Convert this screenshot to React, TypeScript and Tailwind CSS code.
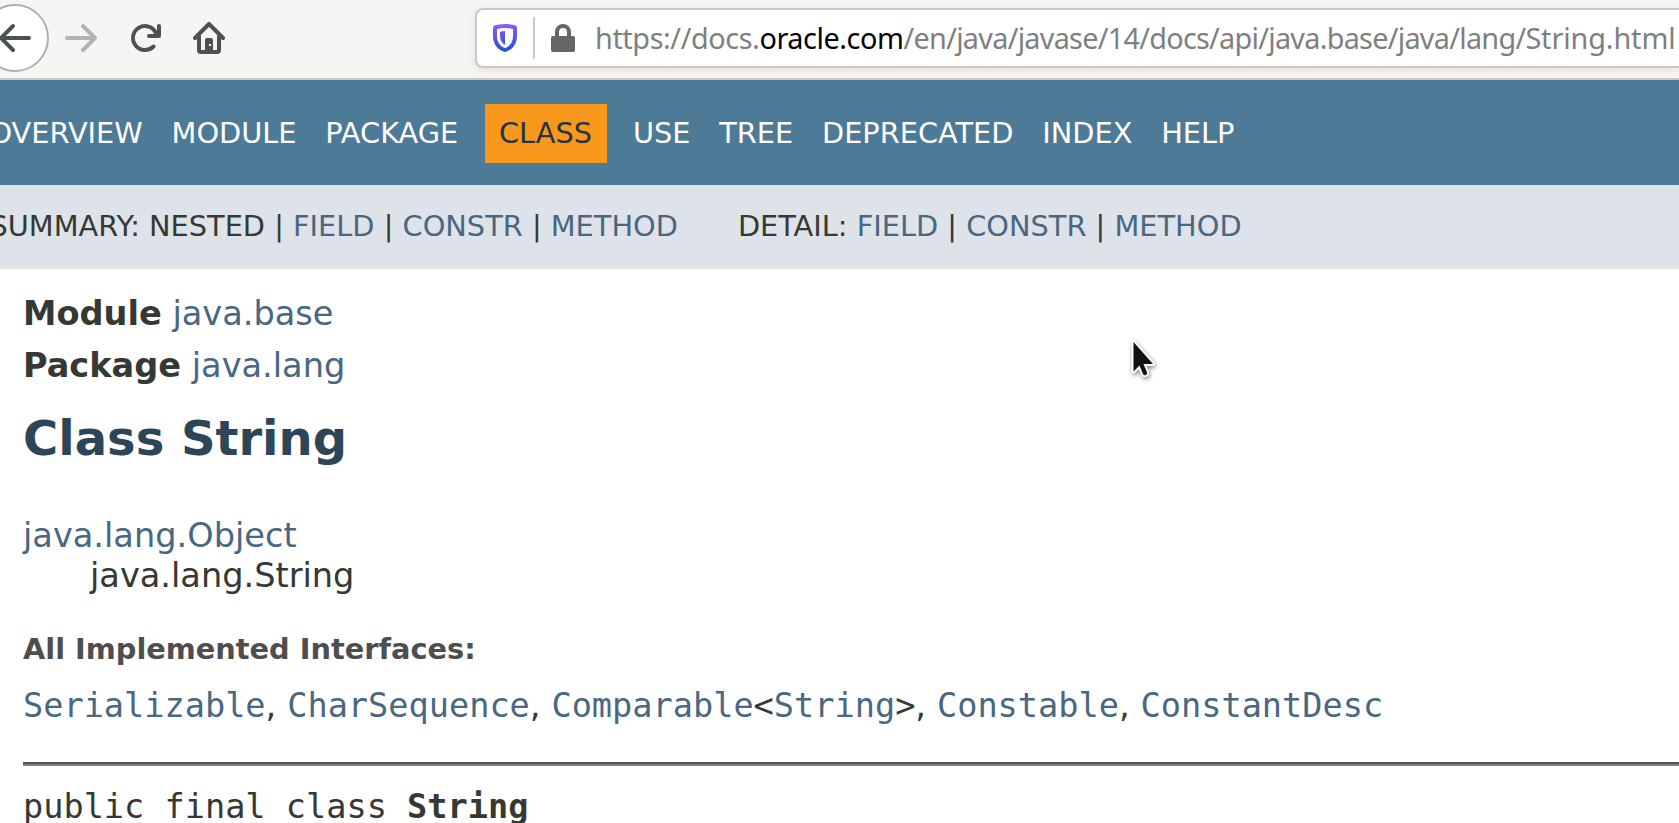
import type { ReactNode } from "react";

const arrow =
  "M15 7H3.414l4.293-4.293a1 1 0 0 0-1.414-1.414l-6 6a1 1 0 0 0 0 1.414l6 6a1 1 0 0 0 1.414-1.414L3.414 9H15a1 1 0 0 0 0-2z";

function Link({ children }: { children: ReactNode }) {
  return <a className="text-[#4a6782]">{children}</a>;
}

function Toolbar() {
  return (
    <header className="flex h-20 items-start border-b-2 border-[#cdc7c2] bg-[#f6f5f4]">
      <div className="-ml-[19px] mt-1 flex size-[68px] shrink-0 items-center justify-center rounded-full border-2 border-[#b0b0ae] bg-white">
        <svg viewBox="0 0 16 16" className="size-8 fill-[#4c5252]"><path d={arrow} /></svg>
      </div>
      <svg viewBox="0 0 16 16" className="ml-4 mt-[22px] size-8 shrink-0 -scale-x-100 fill-[#b2b4b2]"><path d={arrow} /></svg>
      <svg viewBox="0 0 16 16" className="ml-8 mt-[22px] size-8 shrink-0 fill-[#4c5252]">
        <path d="M15 1a1 1 0 0 0-1 1v2.418A6.995 6.995 0 1 0 8 15a6.954 6.954 0 0 0 4.95-2.05 1 1 0 0 0-1.414-1.414A5.019 5.019 0 1 1 12.549 6H10a1 1 0 0 0 0 2h5a1 1 0 0 0 1-1V2a1 1 0 0 0-1-1z" />
      </svg>
      <svg viewBox="0 0 32 32" className="ml-8 mt-[22px] size-8 shrink-0">
        <path d="M2 16 16 2l14 14M6 14v14q0 2 2 2h16q2 0 2-2V14" fill="none" stroke="#4c5252" strokeWidth="4" strokeLinecap="round" strokeLinejoin="round" />
        <path fillRule="evenodd" d="M12 30V18q0-2 2-2h4q2 0 2 2v12zM16 22v2h2v-2z" fill="#4c5252" />
      </svg>
      <div className="ml-[250px] mt-2 flex h-[60px] flex-1 items-center rounded-l-lg border-2 border-r-0 border-[#cdc7c2] bg-white shadow-[0_2px_8px_rgba(0,0,0,0.08)]">
        <svg viewBox="0 0 24 28" className="ml-4 h-7 w-6 shrink-0">
          <defs>
            <linearGradient id="shield" x1="0" y1="0" x2="0" y2="28" gradientUnits="userSpaceOnUse">
              <stop offset="0" stopColor="#9059ff" />
              <stop offset="1" stopColor="#2051d0" />
            </linearGradient>
          </defs>
          <path fill="url(#shield)" fillRule="evenodd" d="M12 0C8 0 4 .8 2 1.300Q0 2 0 4v8c0 8 4.500 14 12 16 7.500-2 12-8 12-16V4q0-2-2-2.700C20 .8 16 0 12 0zM12 4c3 0 6 .5 8 1V12c0 6-3 10.300-8 12-5-1.700-8-6-8-12V5C6 4.500 9 4 12 4z" />
          <path fill="url(#shield)" d="M12 7v14c-3.200-2-5-5-5-9.500V8q2-.8 5-1z" />
        </svg>
        <div className="ml-4 h-[42px] w-0.5 shrink-0 bg-[#cdc7c2]" />
        <svg viewBox="0 0 24 28" className="ml-4 h-7 w-6 shrink-0">
          <path d="M6 14V8a6 6 0 0 1 12 0v6" fill="none" stroke="#666" strokeWidth="4" />
          <rect y="12" width="24" height="16" rx="2" fill="#666" />
        </svg>
        <div className="ml-5 whitespace-nowrap font-['Noto_Sans',sans-serif] text-[28.8px] leading-10 tracking-[-0.41px] text-[#7f7f7f]">
          https://docs.<span className="text-black">oracle.com</span>
          <span className="tracking-[-0.72px]">/en/java/javase/14/docs/api/java.base/java/lang/</span>
          <span className="tracking-[-0.1px]">String.html</span>
        </div>
      </div>
    </header>
  );
}

const before = ["MODULE", "PACKAGE"];
const after = ["USE", "TREE", "DEPRECATED", "INDEX", "HELP"];

function NavItem({ label }: { label: string }) {
  return <li className="px-[14.4px] leading-[59px]">{label}</li>;
}

export default function App() {
  return (
    <div className="h-[823px] w-full overflow-hidden bg-white font-['DejaVu_Sans',sans-serif] text-[33.6px] leading-10 text-[#353833]">
      <Toolbar />
      <nav>
        <ul className="flex h-[105px] items-start bg-[#4d7a97] pt-6 text-[28.8px] text-white">
          <li className="-ml-[25px] px-[14.4px] leading-[59px]">OVERVIEW</li>
          {before.map((l) => <NavItem key={l} label={l} />)}
          <li className="ml-3 mr-[11.4px] bg-[#f8981d] pl-[14.4px] pr-[15px] leading-[59px] text-[#253441]">CLASS</li>
          {after.map((l) => <NavItem key={l} label={l} />)}
        </ul>
        <div className="flex h-[84px] items-center gap-[60px] whitespace-nowrap bg-[#dee3e9] pb-0.5 text-[28.8px]">
          <div className="-ml-[10.5px]">SUMMARY: NESTED | <Link>FIELD</Link> | <Link>CONSTR</Link> | <Link>METHOD</Link></div>
          <div>DETAIL: <Link>FIELD</Link> | <Link>CONSTR</Link> | <Link>METHOD</Link></div>
        </div>
      </nav>
      <main className="pl-[23px] pt-[19px]">
        <div className="leading-[52px]"><b>Module</b> <Link>java.base</Link></div>
        <div className="leading-[52px]"><b>Package</b> <Link>java.lang</Link></div>
        <h1 className="mt-4 text-[48px] font-bold leading-[60px] text-[#2c4557]">Class String</h1>
        <div className="mt-12"><Link>java.lang.Object</Link></div>
        <div className="pl-[67px]">java.lang.String</div>
        <h2 className="mt-[33px] text-[28.8px] font-bold text-[#4e4e4e]">All Implemented Interfaces:</h2>
        <div className="mt-[17px] whitespace-nowrap [word-spacing:0.25px]">
          <code className="font-['DejaVu_Sans_Mono',monospace]"><Link>Serializable</Link></code>,{" "}
          <code className="font-['DejaVu_Sans_Mono',monospace]"><Link>CharSequence</Link></code>,{" "}
          <code className="font-['DejaVu_Sans_Mono',monospace]"><Link>Comparable</Link>&lt;<Link>String</Link>&gt;</code>,{" "}
          <code className="font-['DejaVu_Sans_Mono',monospace]"><Link>Constable</Link></code>,{" "}
          <code className="font-['DejaVu_Sans_Mono',monospace]"><Link>ConstantDesc</Link></code>
        </div>
        <hr className="mt-9 h-1 border-0 border-t-2 border-[#555] bg-[#808080]" />
        <pre className="mt-[21px] font-['DejaVu_Sans_Mono',monospace]">public final class <b>String</b></pre>
      </main>
      <svg viewBox="0 0 28 42" className="absolute left-[1131px] top-[337px] h-[42px] w-7 overflow-visible drop-shadow-[1px_2px_2px_rgba(0,0,0,0.45)]">
        <path d="M2.500 5v29.500l6-6 3.500 8.500q1 1.800 2.800 1t1.200-2.800l-3.500-8.200H22z" fill="#111" stroke="#fff" strokeWidth="4" strokeLinejoin="round" paintOrder="stroke" />
      </svg>
    </div>
  );
}
